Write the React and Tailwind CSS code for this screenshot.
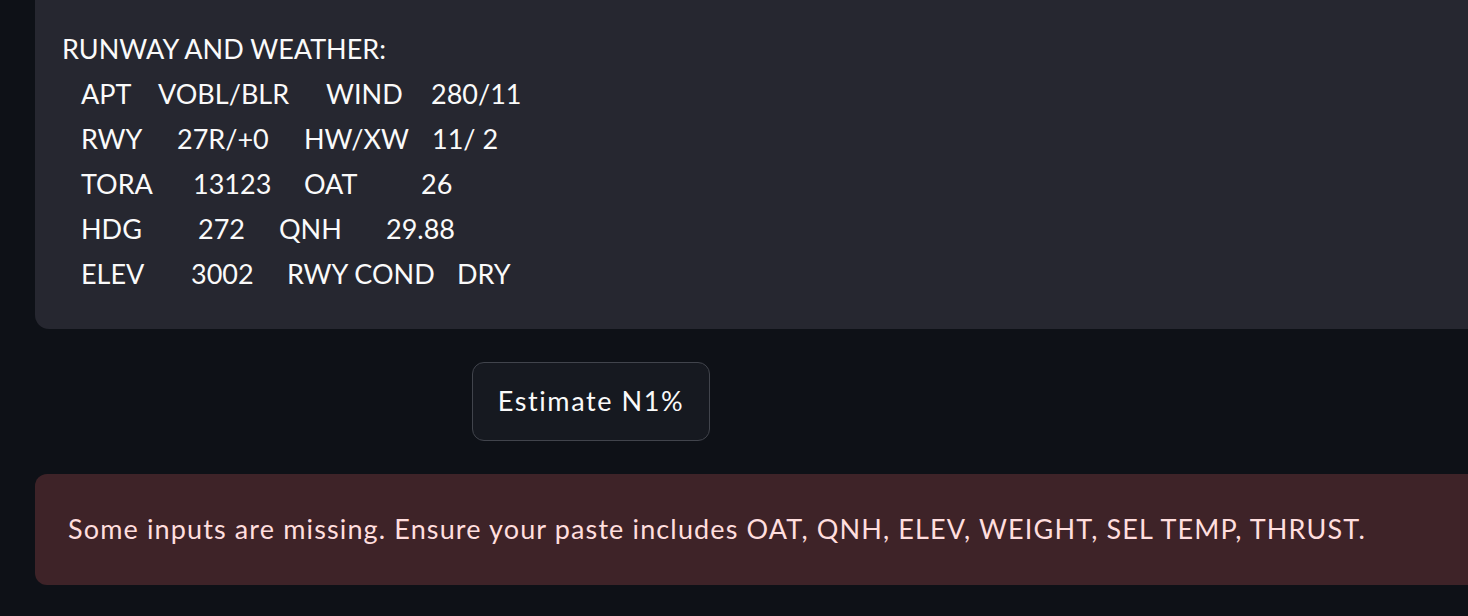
import React from "react";

const rows = [
  [
    ["APT", "w-[77px]"],
    ["VOBL/BLR", "w-[168px]"],
    ["WIND", "w-[105px]"],
    ["280/11", ""],
  ],
  [
    ["RWY", "w-[96px]"],
    ["27R/+0", "w-[127px]"],
    ["HW/XW", "w-[128px]"],
    ["11/ 2", ""],
  ],
  [
    ["TORA", "w-[112px]"],
    ["13123", "w-[111px]"],
    ["OAT", "w-[117px]"],
    ["26", ""],
  ],
  [
    ["HDG", "w-[117px]"],
    ["272", "w-[81px]"],
    ["QNH", "w-[107px]"],
    ["29.88", ""],
  ],
  [
    ["ELEV", "w-[110px]"],
    ["3002", "w-[96px]"],
    ["RWY COND", "w-[170px]"],
    ["DRY", ""],
  ],
];

const App = () => {
  return (
    <div className="w-full h-[616px] overflow-hidden bg-[#0e1117] text-[#fafafa] font-['Lato',sans-serif]">
      <div className="ml-[35px] w-[1500px]">
        {/* RUNWAY BLOCK */}
        <div className="bg-[#262730] rounded-bl-[14px] pt-[26px] pb-[33px] pl-[27px] text-[27px] leading-[45px]">
          <div>RUNWAY AND WEATHER:</div>
          {rows.map((row, i) => (
            <div key={i} className="flex pl-[19px]">
              {row.map(([t, w], j) => (
                <span key={j} className={`whitespace-pre shrink-0 ${w}`}>
                  {t}
                </span>
              ))}
            </div>
          ))}
        </div>

        {/* BUTTON */}
        <div className="mt-[33px] pl-[437px]">
          <button className="w-[238px] h-[79px] rounded-[12px] border border-[#41444c] bg-[#161920] text-[27px] tracking-[1.6px] text-[#fafafa]">
            Estimate N1%
          </button>
        </div>

        {/* ERROR */}
        <div className="mt-[33px] h-[111px] rounded-l-[12px] bg-[#3e2328] flex items-center pl-[33px] text-[27px] tracking-[1.13px] text-[#ffdede]">
          Some inputs are missing. Ensure your paste includes OAT, QNH, ELEV, WEIGHT, SEL TEMP, THRUST.
        </div>
      </div>
    </div>
  );
};

export default App;
